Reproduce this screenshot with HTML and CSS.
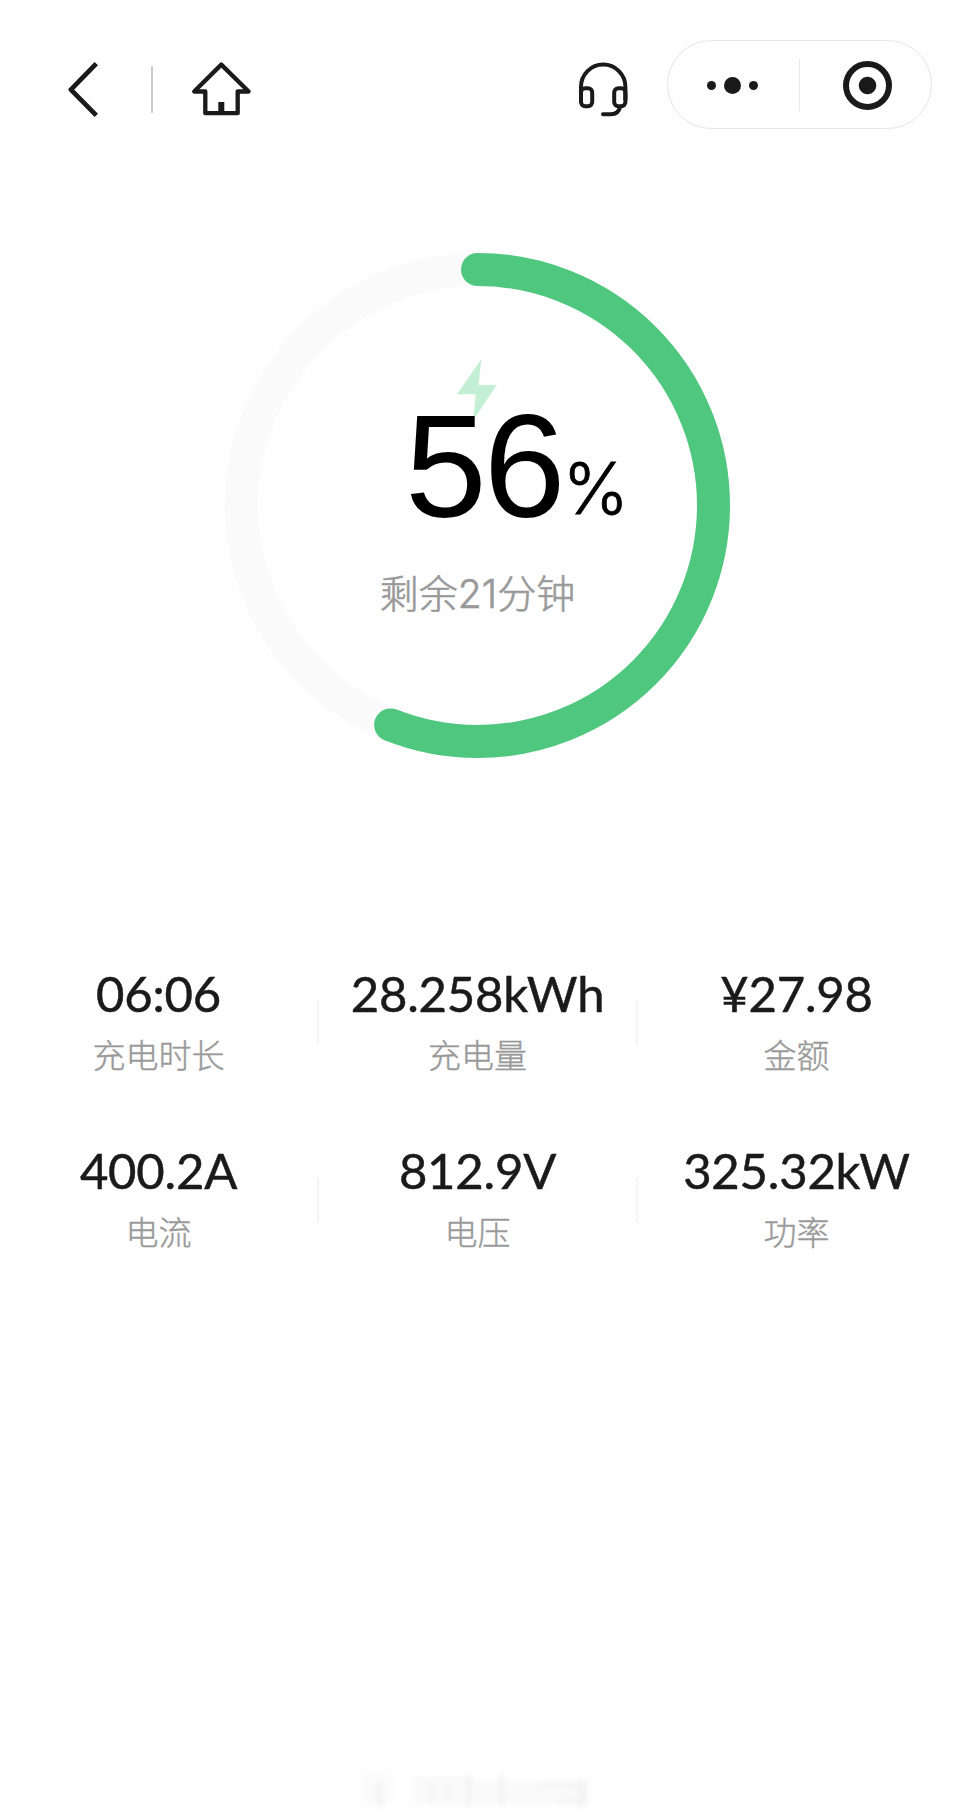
FILE: index.html
```html
<!DOCTYPE html>
<html lang="zh-CN">
    <head>
        <meta charset='utf-8'>
        <title>充电中</title>
        <link rel="stylesheet" href="styles.css">
    </head>
    <body>
        <header class='navbar'>
            <svg class='icon' width='32' height='60' viewBox='68 60 32 60'>
                <path d='M96.3 63.6L70.9 89.6L96.3 115.4' stroke-width='4.8'/>
            </svg>
            <span class='nav-line'></span>
            <svg class='icon home-icon' width='62' height='60' viewBox='190 60 62 60'>
                <path d='M221.3 64.6L194.2 91.5H205.3V113.2H237.7V91.5H248.6Z' stroke-width='4.3'/>
                <path d='M221.3 102V112' stroke-width='6'/>
            </svg>
            <svg class='icon service-icon' width='52' height='60' viewBox='577 60 52 60'>
                <path d='M581 100V86.8a22.2 22.2 0 0 1 44.4 0V100' stroke-width='4'/>
                <rect x='581' y='88.2' width='11.2' height='18' rx='4.2' stroke-width='4'/>
                <rect x='614.2' y='88.2' width='11.2' height='18' rx='4.2' stroke-width='4'/>
                <path d='M620 107q-1.5 7.3-9 7.3H603' stroke-width='4' stroke-linecap='round'/>
            </svg>
            <div class='capsule'>
                <div class='dots'>
                    <i class='dot'></i>
                    <i class='dot big-dot'></i>
                    <i class='dot'></i>
                </div>
                <div class='close'>
                    <i class='close-ring'></i>
                </div>
            </div>
        </header>

        <section class='progress'>
            <svg class='ring' width='505' height='505' viewBox='0 0 505 505'>
                <circle class='ring-track' cx='252.5' cy='252.5' r='236'/>
                <circle class='ring-value' cx='252.5' cy='252.5' r='236' pathLength='100' stroke-dasharray='56 100' transform='rotate(-90 252.5 252.5)'/>
            </svg>
            <div class='progress-info'>
                <svg class='bolt' width='40' height='62' viewBox='0 0 40 62'>
                    <path d='M24.3 0L0 35.3H18.7L16.3 61L39.7 26H21.7Z'/>
                </svg>
                <div class='percent'><span class='percent-num'>56</span><span class='percent-sign'>%</span></div>
                <div class='remain'>剩余21分钟</div>
            </div>
        </section>

        <section class='stats'>
            <div class='stat'>
                <div class='value'>06:06</div>
                <div class='label'>充电时长</div>
            </div>
            <div class='stat'>
                <div class='value'>28.258kWh</div>
                <div class='label'>充电量</div>
            </div>
            <div class='stat'>
                <div class='value'>¥27.98</div>
                <div class='label'>金额</div>
            </div>
            <div class='stat'>
                <div class='value'>400.2A</div>
                <div class='label'>电流</div>
            </div>
            <div class='stat'>
                <div class='value'>812.9V</div>
                <div class='label'>电压</div>
            </div>
            <div class='stat'>
                <div class='value'>325.32kW</div>
                <div class='label'>功率</div>
            </div>
        </section>

        <footer class='footer'>
            <svg width='236' height='44' viewBox='0 0 236 44'>
                <g class='haze'>
                    <rect x='4' y='6' width='28' height='30' opacity='.3'/>
                    <rect x='17' y='14' width='7' height='24'/>
                    <rect x='54' y='8' width='50' height='28' opacity='.35'/>
                    <rect x='68' y='16' width='9' height='20' opacity='.6'/>
                    <rect x='86' y='16' width='6' height='20' opacity='.6'/>
                    <rect x='106' y='8' width='7' height='31'/>
                    <rect x='114' y='14' width='112' height='22' opacity='.4'/>
                    <rect x='140' y='8' width='6' height='30'/>
                    <rect x='180' y='15' width='48' height='5'/>
                    <rect x='196' y='30' width='32' height='5' opacity='.8'/>
                    <rect x='218' y='12' width='10' height='26'/>
                </g>
            </svg>
        </footer>
    </body>
</html>
```
FILE: styles.css
```css
*{
    box-sizing: border-box;
}
body{
    margin: 0;
    height: 1815px;
    display: flex;
    flex-direction: column;
    background-color: #fefefe;
    font-family: Inter, "Noto Sans CJK SC", sans-serif;
    color: #1a1a1a;
}

.navbar{
    display: flex;
    height: 89px;
    margin-top: 40px;
    padding: 0 22px 0 68px;
}

.icon{
    margin-top: 20px;
    fill: none;
    stroke: #1a1a1a;
    stroke-linejoin: round;
}

.nav-line{
    width: 2px;
    height: 47px;
    margin: 26px 0 0 51px;
    background-color: #ccc;
}

.home-icon{
    margin-left: 37px;
}

.service-icon{
    margin-left: auto;
}

.capsule{
    display: flex;
    align-items: center;
    width: 265px;
    height: 89px;
    margin-left: 38px;
    padding-top: 1px;
    border: 1px solid #e6e6e6;
    border-radius: 45px;
}

.dots{
    display: flex;
    align-items: center;
    justify-content: center;
    gap: 8px;
    width: 132px;
    height: 52px;
    padding-right: 2px;
    border-right: 1px solid #e6e6e6;
}

.dot{
    width: 9px;
    height: 9px;
    border-radius: 50%;
    background-color: #1a1a1a;
}

.big-dot{
    width: 17px;
    height: 17px;
}

.close{
    display: flex;
    flex: 1;
    justify-content: center;
    padding-left: 3px;
}

.close-ring{
    width: 49px;
    height: 49px;
    border: 6px solid #1a1a1a;
    border-radius: 50%;
    background: radial-gradient(circle, #1a1a1a 8.2px, transparent 9.2px);
}

.progress{
    display: grid;
    width: 505px;
    height: 505px;
    margin: 124px 0 0 225px;
}

.ring, .progress-info{
    grid-area: 1 / 1;
}

.ring circle{
    fill: none;
    stroke-width: 33;
}

.ring .ring-track{
    stroke: #fafafa;
}

.ring .ring-value{
    stroke: #4fc77f;
    stroke-linecap: round;
}

.progress-info{
    display: flex;
    flex-direction: column;
    align-items: center;
    padding-top: 106px;
}

.bolt{
    fill: #c3efd5;
    margin-right: 2px;
}

.percent{
    position: relative;
    display: flex;
    align-items: baseline;
    height: 110px;
    margin: -10px 0 0 77px;
    line-height: 110px;
    color: #000;
}

.percent-num{
    font-family: "Liberation Sans", sans-serif;
    font-size: 147px;
    letter-spacing: -3px;
}

.percent-sign{
    margin-bottom: 3px;
    font-size: 71px;
    font-weight: 300;
    letter-spacing: -2px;
    transform: translateY(-3px);
    -webkit-text-stroke: .8px #000;
}

.remain{
    margin-top: 43px;
    font-size: 39px;
    line-height: 60px;
    font-weight: 300;
    color: #999;
    -webkit-text-stroke: .6px #999;
}

.stats{
    display: grid;
    grid-template-columns: repeat(3, 319px);
    grid-auto-rows: 176.5px;
    margin-top: 206px;
}

.stat{
    display: flex;
    flex-direction: column;
    align-items: center;
    padding-right: 2px;
    background: linear-gradient(#f5f5f5, #f5f5f5) right 37px / 2px 44px no-repeat;
}

.stat:nth-child(3n){
    background: none;
}

.value{
    margin-top: -1px;
    font-family: Lato, sans-serif;
    font-size: 49px;
    line-height: 60px;
    letter-spacing: -.2px;
    white-space: nowrap;
    -webkit-text-stroke: .5px #1a1a1a;
}

.label{
    margin-top: 10px;
    font-size: 33px;
    line-height: 46px;
    font-weight: 300;
    color: #999;
    -webkit-text-stroke: .4px #999;
}

.footer{
    margin-top: auto;
    height: 47px;
    padding-left: 359px;
}

.haze{
    fill: #f4f4f4;
    filter: blur(2px);
}
```
